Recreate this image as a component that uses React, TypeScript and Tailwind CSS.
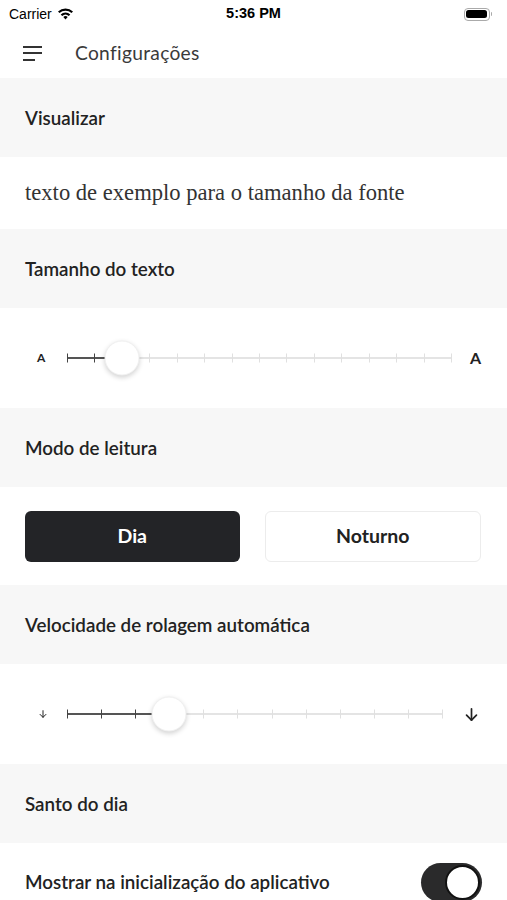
import React from 'react';

const sans = { fontFamily: 'Lato, "Open Sans", sans-serif' };

function SectionHeader({ title }: { title: string }) {
    return (
        <div className="h-[79px] bg-[#f7f7f7] flex items-center px-[25px] pt-[1px]">
            <span className="text-[18.8px] font-semibold text-[#222]" style={sans}>{title}</span>
        </div>
    );
}

function TickSlider({ steps, value, right, left, rightWidth }: { steps: number; value: number; left: React.ReactNode; right: React.ReactNode; rightWidth: string }) {
    const ticks = Array.from({ length: steps + 1 }, (_, i) => i);
    const pct = (value / steps) * 100;
    return (
        <div className="h-[100px] flex items-center px-[25px] gap-0">
            <div className="w-[42px] flex items-center">{left}</div>
            <div className="relative flex-1 h-[34px]">
                <div className="absolute left-0 right-0 top-1/2 h-[2px] -translate-y-1/2 bg-[#e4e4e4]" />
                <div className="absolute left-0 top-1/2 h-[2px] -translate-y-1/2 bg-[#555]" style={{ width: `${pct}%` }} />
                {ticks.map((i) => (
                    <div
                        key={i}
                        className={`absolute top-1/2 w-px h-[9px] -translate-y-1/2 ${i <= value ? 'bg-[#444]' : 'bg-[#e0e0e0]'}`}
                        style={{ left: `${(i / steps) * 100}%` }}
                    />
                ))}
                <div
                    className="absolute top-1/2 w-[35px] h-[35px] -translate-x-1/2 -translate-y-1/2 rounded-full bg-white shadow-[0_2px_5px_rgba(0,0,0,0.18)] border border-[#f0f0f0]"
                    style={{ left: `${pct}%` }}
                />
            </div>
            <div className={`${rightWidth} flex items-center justify-end`}>{right}</div>
        </div>
    );
}

function ArrowDown({ size }: { size: number }) {
    return (
        <svg width={size} height={size} viewBox="0 0 24 24" fill="none" stroke="#222" strokeWidth={2.4} strokeLinecap="round" strokeLinejoin="round">
            <path d="M12 4v16" />
            <path d="M5 13l7 7 7-7" />
        </svg>
    );
}

export default function App() {
    return (
        <div className="w-[507px] h-[900px] overflow-hidden bg-white" style={sans}>
            {/* status bar */}
            <div className="h-[28px] relative flex items-center px-[9px] text-black" style={{ fontFamily: '"Liberation Sans", Arial, sans-serif' }}>
                <div className="flex items-center gap-[5px] text-[14px]">
                    <span>Carrier</span>
                    <svg width="17" height="12" viewBox="0 0 17 12">
                        <path d="M8.5 11.5l2.2-2.6a3.3 3.3 0 00-4.4 0z" fill="#000" />
                        <path d="M3.7 6.4a7 7 0 019.6 0l-1.5 1.7a4.8 4.8 0 00-6.6 0z" fill="#000" />
                        <path d="M1 3.4a11 11 0 0115 0l-1.5 1.7a8.7 8.7 0 00-12 0z" fill="#000" />
                    </svg>
                </div>
                <span className="absolute left-1/2 -translate-x-1/2 text-[14.5px] font-bold">5:36 PM</span>
                <div className="ml-auto flex items-center mr-[6px]">
                    <div className="w-[26px] h-[13px] rounded-[4px] border border-[#aaa] p-[1.5px]">
                        <div className="w-full h-full rounded-[2.5px] bg-black" />
                    </div>
                    <div className="w-[1.5px] h-[4px] bg-[#aaa] rounded-r ml-[1px]" />
                </div>
            </div>

            {/* nav bar */}
            <div className="h-[50px] flex items-center px-[23px] gap-[33px]">
                <div className="flex flex-col gap-[4.5px] w-[19px]">
                    <div className="h-[2px] bg-[#333] w-[19px]" />
                    <div className="h-[2px] bg-[#333] w-[19px]" />
                    <div className="h-[2px] bg-[#333] w-[12px]" />
                </div>
                <span className="text-[19.2px] text-[#3a3a3a] tracking-[0.3px]">Configurações</span>
            </div>

            <SectionHeader title="Visualizar" />
            <div className="h-[72px] flex items-center px-[25px]">
                <span className="text-[22.6px] text-[#333]" style={{ fontFamily: '"Liberation Serif", "Times New Roman", serif' }}>
                    texto de exemplo para o tamanho da fonte
                </span>
            </div>

            <SectionHeader title="Tamanho do texto" />
            <TickSlider
                steps={14}
                value={2}
                rightWidth="w-[31px]"
                left={<span className="text-[12px] font-bold text-[#222] ml-[12px]">A</span>}
                right={<span className="text-[16px] font-bold text-[#222] mr-[1px]">A</span>}
            />

            <SectionHeader title="Modo de leitura" />
            <div className="h-[98px] flex items-center gap-[25px] pl-[25px] pr-[26px]">
                <button type="button" className="flex-1 h-[51px] rounded-[6px] bg-[#232427] text-white text-[19.5px] font-bold">
                    Dia
                </button>
                <button type="button" className="flex-1 h-[51px] rounded-[6px] bg-white border border-[#ececec] text-[#222] text-[19.5px] font-bold">
                    Noturno
                </button>
            </div>

            <SectionHeader title="Velocidade de rolagem automática" />
            <TickSlider
                steps={11}
                value={3}
                rightWidth="w-[40px]"
                left={<span className="ml-[13px] flex"><ArrowDown size={10} /></span>}
                right={<span className="flex mr-[2px]"><ArrowDown size={17} /></span>}
            />

            <SectionHeader title="Santo do dia" />
            <div className="h-[78px] flex items-center justify-between pl-[25px] pr-[25px]">
                <span className="text-[18.8px] font-semibold text-[#222]">Mostrar na inicialização do aplicativo</span>
                <div className="w-[61px] h-[39px] rounded-full bg-[#2a2a2b] flex items-center justify-end p-[2px]">
                    <div className="w-[35px] h-[35px] rounded-full bg-white border-[2px] border-[#111]" />
                </div>
            </div>
        </div>
    );
}
